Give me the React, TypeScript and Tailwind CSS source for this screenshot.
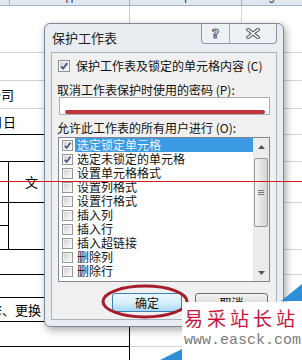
import type { ReactNode } from "react";

const cjk = "font-['Noto_Sans_CJK_SC',sans-serif]";

function Box({ checked = false, size = 12 }: { checked?: boolean; size?: number }) {
  return (
    <svg width={size} height={size} viewBox="0 0 12 12" className="shrink-0">
      <defs>
        <linearGradient id="cbg" x1="0" y1="0" x2="1" y2="1">
          <stop offset="0" stopColor="#d2d2d2" />
          <stop offset="1" stopColor="#fafafa" />
        </linearGradient>
      </defs>
      <rect x="0.5" y="0.5" width="11" height="11" fill="#f7f7f7" stroke="#8e8f8f" />
      <rect x="2" y="2" width="8" height="8" fill="url(#cbg)" />
      {checked && <path d="M3 6.3 L5.1 8.6 L9.3 3.1" fill="none" stroke="#45577f" strokeWidth="1.8" />}
    </svg>
  );
}

function Row({ h, dark = false, children }: { h: string; dark?: boolean; children?: ReactNode }) {
  const line = dark ? "border-black" : "border-[#d0d0d0]";
  return (
    <div className={`flex ${h}`}>
      <div className={`flex w-[130px] items-center overflow-hidden border-b border-r ${line}`}>{children}</div>
      <div className="w-[112px] border-b border-r border-[#d6d6d6]" />
      <div className="flex-1 border-b border-[#d6d6d6]" />
    </div>
  );
}

const perms = ["选定锁定单元格", "选定未锁定的单元格", "设置单元格格式", "设置列格式", "设置行格式", "插入列", "插入行", "插入超链接", "删除列", "删除行"];

export default function App() {
  return (
    <div className={`relative h-[360px] w-[302px] overflow-hidden bg-white text-[13px] text-black ${cjk}`}>
      {/* column header */}
      <div className="flex h-[6px] overflow-hidden border-b border-[#9eb6ce] bg-[#dfe7f1] font-['Liberation_Sans',sans-serif] text-[11px] leading-[12px] text-[#2f3f55]">
        <div className="w-[10px] border-r border-[#9eb6ce]" />
        <div className="-mt-[7px] w-[120px] border-r border-[#9eb6ce] text-center">H</div>
        <div className="-mt-[7px] w-[112px] border-r border-[#9eb6ce] text-center">I</div>
        <div className="-mt-[7px] flex-1 text-center">J</div>
      </div>

      {/* sheet */}
      <Row h="h-[47px]" />
      <Row h="h-[28px]" />
      <Row h="h-[28px]"><span className="-ml-[12px]">公司</span></Row>
      <Row h="h-[26px]" dark><span className="-ml-[10px]">月日</span></Row>
      <Row h="h-[27px]" dark />
      <Row h="h-[41px]" dark>
        <div className="h-full w-[9px] border-r border-black" />
        <span className="ml-[16px]">文</span>
      </Row>
      <Row h="h-[47px]" dark>
        <div className="flex h-full w-[9px] flex-col border-r border-black">
          <div className="h-[23px] border-b border-black" />
        </div>
      </Row>
      <Row h="h-[25px]" dark />
      <Row h="h-[23px]" dark />
      <Row h="h-[24px]" dark><span className="-ml-[11px]">修、更换</span></Row>
      <Row h="h-[25px]" dark />
      <Row h="h-[25px]" dark />

      {/* dialog */}
      <div className="absolute left-[44px] top-[23px] flex h-[304px] w-[240px] flex-col rounded-[6px] border border-[#7d8895] bg-[#e9edf1] text-[12px] shadow-[2px_3px_8px_rgba(0,0,0,0.35)]">
        <div className="flex h-[28px] items-start">
          <div className="pl-[7px] pt-[5px] text-[13px] leading-[18px] text-[#1e1e1e]">保护工作表</div>
          <div className="ml-auto mr-[6px] flex h-[20px] overflow-hidden rounded-b-[4px] border border-t-0 border-[#8b96a3] bg-[#eef1f4]">
            <div className="flex w-[28px] items-center justify-center border-r border-[#a3acb6] font-['DejaVu_Sans',sans-serif] text-[13px] font-bold text-white [-webkit-text-stroke:1px_#5a5a5a]">?</div>
            <div className="flex w-[46px] items-center justify-center">
              <svg width="14" height="11" viewBox="0 0 14 11">
                <path d="M2 1.5 L12 9.5 M12 1.5 L2 9.5" stroke="#5f5f5f" strokeWidth="3.6" strokeLinecap="square" />
                <path d="M2 1.5 L12 9.5 M12 1.5 L2 9.5" stroke="#ffffff" strokeWidth="1.6" strokeLinecap="square" />
              </svg>
            </div>
          </div>
        </div>

        <div className="mx-[6px] mb-[6px] flex flex-1 flex-col border border-[#a9b2bc] bg-[#f0f0f0] text-[#111]">
          <div className="flex h-[26px] items-center gap-[6px] pl-[6px]">
            <Box checked />
            <span>保护工作表及锁定的单元格内容 (C)</span>
          </div>
          <div className="mt-[4px] pl-[5px] leading-[14px]">取消工作表保护时使用的密码 (P):</div>
          <div className="relative ml-[7px] h-[18px] w-[211px] border border-[#abadb3] bg-white">
            <div className="absolute left-[5px] right-[4px] top-[12px] h-[4px] rounded-full bg-[#c3343d]" />
          </div>
          <div className="mt-[6px] pl-[5px] leading-[14px]">允许此工作表的所有用户进行 (O):</div>

          <div className="ml-[6px] mt-[2px] flex h-[145px] w-[212px] border border-[#828790] bg-white">
            <div className="flex flex-1 flex-col">
              {perms.map((p, i) => (
                <div key={p} className="flex h-[14px] items-center pl-[3px]">
                  <Box checked={i < 2} size={11} />
                  <span className={`ml-[2px] flex-1 px-[2px] leading-[14px] ${i === 0 ? "bg-[#3d9be4] text-[#eaf6ff]" : ""}`}>{p}</span>
                </div>
              ))}
            </div>
            <div className="flex w-[16px] flex-col bg-[#ececec]">
              <div className="flex h-[17px] items-center justify-center">
                <svg width="7" height="4" viewBox="0 0 7 4"><path d="M0 4 L3.5 0 L7 4 Z" fill="#555" /></svg>
              </div>
              <div className="mx-[1px] mt-[3px] flex h-[69px] items-center justify-center rounded-[2px] border border-[#979797] bg-gradient-to-r from-[#f4f4f4] to-[#d4d4d4]">
                <div className="flex flex-col gap-[1px]">
                  <div className="h-px w-[6px] bg-[#777]" />
                  <div className="h-px w-[6px] bg-[#777]" />
                  <div className="h-px w-[6px] bg-[#777]" />
                </div>
              </div>
              <div className="mt-auto flex h-[17px] items-center justify-center">
                <svg width="7" height="4" viewBox="0 0 7 4"><path d="M0 0 L3.5 4 L7 0 Z" fill="#555" /></svg>
              </div>
            </div>
          </div>

          <div className="mt-[11px] flex h-[19px]">
            <div className="ml-[60px] flex w-[70px] items-center justify-center rounded-[3px] border border-[#3c7fb1] bg-gradient-to-b from-[#eaf6fd] via-[#d9f0fc] to-[#a7d9f5]">确定</div>
            <div className="ml-[13px] flex w-[73px] items-center justify-center rounded-[3px] border border-[#707070] bg-gradient-to-b from-[#f2f2f2] to-[#cfcfcf]">取消</div>
          </div>
        </div>
      </div>

      {/* annotation ellipse */}
      <svg className="absolute left-[101px] top-[284px]" width="88" height="35" viewBox="0 0 88 35">
        <ellipse cx="44" cy="17.5" rx="42" ry="15.5" fill="none" stroke="#a51d2a" strokeWidth="3" />
      </svg>

      {/* red guide line */}
      <div className="absolute inset-x-0 top-[181px] h-px bg-[#d11a22]" />

      {/* watermark */}
      <div className="absolute left-[160px] top-[282px] h-[78px] w-[142px]">
        <svg className="absolute inset-0" width="142" height="78" viewBox="0 0 142 78">
          <polygon points="121,19 142,2 142,19" fill="#2d8fd9" />
          <polygon points="0,78 22,67 22,78" fill="#2d8fd9" />
          <rect x="22" y="20" width="120" height="58" fill="#ffffff" />
        </svg>
        <div className="relative flex flex-col pl-[24px] pt-[24px]">
          <span className="whitespace-nowrap text-[19px] leading-[24px] tracking-[4px] text-[#c8143c]">易采站长站</span>
          <span className="mt-[2px] whitespace-nowrap font-['Liberation_Mono',monospace] text-[15px] leading-[18px] text-[#7c7c7c]">www.easck.com</span>
        </div>
      </div>
    </div>
  );
}
